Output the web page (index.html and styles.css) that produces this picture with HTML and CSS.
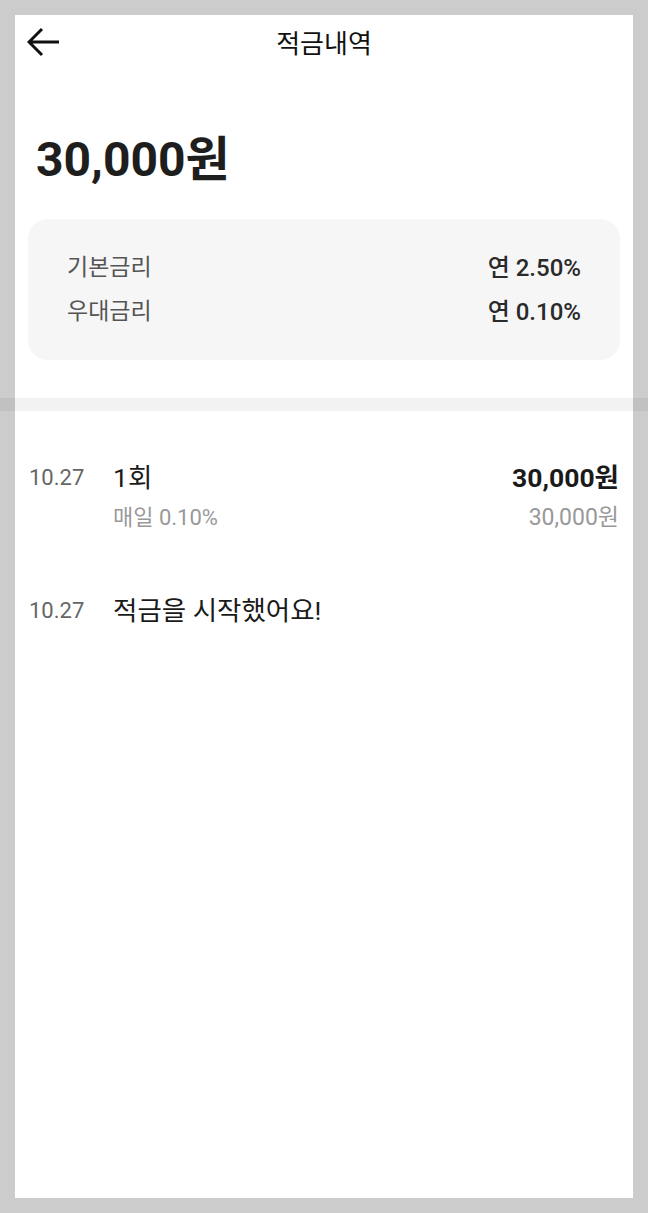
FILE: index.html
```html
<!DOCTYPE html>
<html lang="ko">
<head>
    <meta charset="UTF-8">
    <meta name="viewport" content="width=device-width, initial-scale=1.0">
    <title>적금내역</title>
    <link rel="stylesheet" href="styles.css">
</head>
<body>
    <div class="screen">
        <header class="top-bar">
            <button class="back-button" aria-label="뒤로">
                <svg width="34" height="30" viewBox="0 0 34 30">
                    <path d="M32 15H3M15 2L2 15l13 13" fill="none" stroke="#111" stroke-width="3" stroke-linecap="butt" stroke-linejoin="miter"/>
                </svg>
            </button>
            <h1 class="title">적금내역</h1>
        </header>

        <div class="total">30,000원</div>

        <div class="rate-card">
            <div class="rate-row">
                <span class="rate-label">기본금리</span>
                <span class="rate-value">연 2.50%</span>
            </div>
            <div class="rate-row">
                <span class="rate-label">우대금리</span>
                <span class="rate-value">연 0.10%</span>
            </div>
        </div>

        <div class="divider"></div>

        <ul class="history">
            <li class="history-item">
                <span class="date">10.27</span>
                <div class="info">
                    <div class="main-line">
                        <span class="name">1회</span>
                        <span class="amount">30,000원</span>
                    </div>
                    <div class="sub-line">
                        <span class="sub">매일 0.10%</span>
                        <span class="sub sub-amount">30,000원</span>
                    </div>
                </div>
            </li>
            <li class="history-item">
                <span class="date">10.27</span>
                <div class="info">
                    <div class="main-line">
                        <span class="name">적금을 시작했어요!</span>
                    </div>
                </div>
            </li>
        </ul>
    </div>
</body>
</html>
```

FILE: styles.css
```css
html, body {
    margin: 0;
    height: 100%;
}

body {
    background-color: #cccccc;
    padding: 15px;
    box-sizing: border-box;
    font-family: Roboto, "Noto Sans CJK KR", sans-serif;
    color: #222;
}

.screen {
    background-color: #fff;
    height: 1183px;
}

.top-bar {
    position: relative;
    height: 52px;
    display: flex;
    align-items: center;
    justify-content: center;
}

.back-button {
    position: absolute;
    left: 12px;
    top: 12px;
    padding: 0;
    border: none;
    background: none;
    display: flex;
}

.title {
    margin: 0;
    font-size: 26px;
    font-weight: 400;
    color: #111;
}

.total {
    margin: 63px 0 0 21px;
    height: 60px;
    line-height: 60px;
    font-size: 48px;
    font-weight: 700;
    color: #1e1e1e;
}

.rate-card {
    margin: 29px 13px 0;
    padding: 27px 39px 26px;
    background-color: #f6f6f6;
    border-radius: 20px;
}

.rate-row {
    display: flex;
    justify-content: space-between;
    height: 44px;
    line-height: 44px;
}

.rate-label {
    font-size: 23px;
    color: #555;
}

.rate-value {
    font-size: 24px;
    font-weight: 500;
    color: #2a2a2a;
}

.divider {
    margin: 38px -15px 0;
    height: 13px;
    background-color: rgba(0, 0, 0, 0.05);
}

.history {
    list-style: none;
    margin: 0;
    padding: 51px 14px 0;
}

.history-item {
    display: flex;
    margin-bottom: 62px;
}

.date {
    width: 84px;
    flex-shrink: 0;
    height: 32px;
    line-height: 32px;
    font-size: 22px;
    color: #666;
}

.info {
    flex: 1;
}

.main-line, .sub-line {
    display: flex;
    justify-content: space-between;
}

.main-line {
    height: 32px;
    line-height: 32px;
}

.name {
    font-size: 26.5px;
    color: #1a1a1a;
}

.amount {
    font-size: 26.5px;
    font-weight: 700;
    color: #1a1a1a;
}

.sub-line {
    margin-top: 9px;
    height: 30px;
    line-height: 30px;
}

.sub {
    font-size: 22px;
    color: #999;
}

.sub-amount {
    font-size: 23px;
}
```
